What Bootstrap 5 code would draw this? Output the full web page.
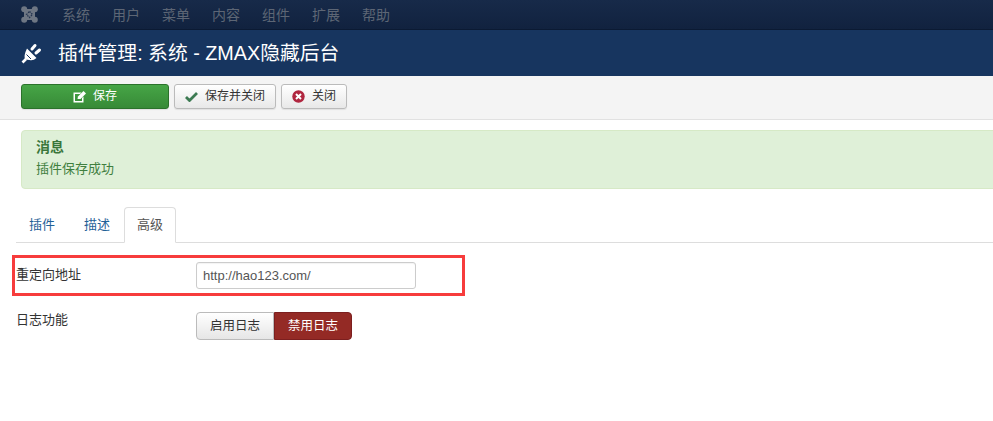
<!DOCTYPE html>
<html lang="zh">
<head>
<meta charset="utf-8">
<title>插件管理</title>
<link href="https://cdn.jsdelivr.net/npm/bootstrap@5.3.0/dist/css/bootstrap.min.css" rel="stylesheet">
<style>
html,body{height:421px;overflow:hidden;background:#fff}
body{font-family:"Liberation Sans","Noto Sans CJK SC",sans-serif;font-size:13px;line-height:18px;color:#333}
.top-bar{height:30px;background:linear-gradient(#172a49,#11223f);border-bottom:1px solid #0b1a33;padding-left:21px;gap:21px;color:#5d6675;font-size:14px}
.top-bar svg{margin-right:3px}
.top-item{width:29px;white-space:nowrap}
.title-bar{height:46px;background:#17355f;color:#fff;padding-left:21px;font-size:19.8px;gap:16px}
.tool-bar{height:44px;background:#f4f4f4;border-bottom:1px solid #e1e1e1;padding:8px 0 0 21px;gap:5px}
.tbtn{height:25px;border:1px solid #bbb;border-radius:3px;background:linear-gradient(#fff,#e8e8e8);color:#333;font-size:12px;line-height:23px;padding:0;gap:7px;--bs-btn-hover-color:#333;box-shadow:0 1px 1px rgba(0,0,0,.08)}
.tbtn-save{width:148px;background:linear-gradient(#46a546,#378a37);border-color:#2b722b;color:#fff;--bs-btn-hover-color:#fff}
.tbtn-apply{width:102px}
.tbtn-close{width:66px}
.msg-box{margin:10px -40px 0 21px;height:59px;background:#dff0d8;border:1px solid #d6e9c6;border-radius:4px;padding:6px 14px;color:#3f7f3f;font-size:13px;line-height:18px}
.msg-title{font-size:14px;font-weight:700;line-height:20px;margin-bottom:3px;color:#3a763a}
.tab-row{margin:18px 0 0 16px;height:36px;border-bottom:1px solid #ddd}
.tab-row .nav-link{border:1px solid transparent;border-radius:4px 4px 0 0;height:36px;padding:8px 12px;font-size:13px;line-height:18px;color:#1f6197;margin:0 3px 0 0}
.tab-row .nav-link.active{width:52px;color:#555;background:#fff;border-color:#ddd #ddd #fff;height:36px;margin:0 0 0 -2px}
.form-area{margin:0 0 0 16px;padding-top:19px;position:relative}
.field-row{font-size:13px}
.field-label{width:180px;color:#333;margin-top:-2px}
.log-row .field-label{margin-top:-1px}
.url-input{width:220px;height:27px;border:1px solid #ccc;border-radius:3px;padding:4px 6px;font-size:13px;line-height:18px;color:#555;box-shadow:inset 0 1px 1px rgba(0,0,0,.05)}
.log-row{margin-top:23px}
.sw-on{width:78px;height:28px;border:1px solid #bbb;border-radius:4px 0 0 4px;background:linear-gradient(#fff,#e6e6e6);color:#333;font-size:12.5px;padding:0}
.sw-off{width:78px;height:28px;border:1px solid #7c1f1f;border-radius:0 4px 4px 0;background:#942a25;color:#fff;font-size:12.5px;padding:0}
.mark-frame{position:absolute;left:-4px;top:12px;width:453px;height:41px;border:3px solid #f73c3c;pointer-events:none}
</style>
</head>
<body>
<nav class="top-bar d-flex align-items-center">
<svg width="17" height="17" viewBox="0 0 17 17" aria-hidden="true"><g fill="#6e7683"><circle cx="3.2" cy="3.2" r="3"/><circle cx="13.8" cy="3.2" r="3"/><circle cx="3.2" cy="13.8" r="3"/><circle cx="13.8" cy="13.8" r="3"/><rect x="3" y="3" width="11" height="11"/></g><path d="M8.5 5.5L11.5 8.5L8.5 11.5L5.5 8.5Z" fill="none" stroke="#243450" stroke-width="1.3" stroke-dasharray="1.5 1"/></svg>
<span class="top-item">系统</span><span class="top-item">用户</span><span class="top-item">菜单</span><span class="top-item">内容</span><span class="top-item">组件</span><span class="top-item">扩展</span><span class="top-item">帮助</span>
</nav>
<header class="title-bar d-flex align-items-center">
<svg width="21" height="21" viewBox="0 0 21 21" aria-hidden="true"><path d="M1.5 19.5L5 16" stroke="#fff" stroke-width="2.6"/><path d="M6 5.5L15.5 15Q12 18 8.5 17L4 16.5Q2.5 12.5 6 5.5Z" fill="#fff"/><path d="M11 6L14 2.5M15 10L18.5 7" stroke="#fff" stroke-width="3" stroke-linecap="round"/><path d="M5.5 11.5L10 16" stroke="#17355f" stroke-width="1"/></svg>
<span>插件管理: 系统 - ZMAX隐藏后台</span>
</header>
<div class="tool-bar d-flex">
<button class="btn tbtn tbtn-save d-flex align-items-center justify-content-center" type="button"><svg width="13" height="12" viewBox="0 0 13 12" aria-hidden="true"><path d="M.5 1.5H8.5L7 3H2V10H9V7L10.5 5.5V11.5H.5Z" fill="#fff"/><path d="M4.5 8L5 5.5L10.5 0L13 2.5L7.5 8Z" fill="#fff"/></svg>保存</button>
<button class="btn tbtn tbtn-apply d-flex align-items-center justify-content-center" type="button"><svg width="13" height="11" viewBox="0 0 13 11" aria-hidden="true"><path d="M1 6L4.5 9.5L12 2" fill="none" stroke="#3c7a52" stroke-width="2.8"/></svg>保存并关闭</button>
<button class="btn tbtn tbtn-close d-flex align-items-center justify-content-center" type="button"><svg width="13" height="13" viewBox="0 0 13 13" aria-hidden="true"><circle cx="6.5" cy="6.5" r="6.2" fill="#b0263f"/><path d="M4 4L9 9M9 4L4 9" stroke="#fff" stroke-width="2"/></svg>关闭</button>
</div>
<div class="msg-box">
<div class="msg-title">消息</div>
<div>插件保存成功</div>
</div>
<ul class="nav tab-row">
<li class="nav-item"><a class="nav-link" href="#">插件</a></li>
<li class="nav-item"><a class="nav-link" href="#">描述</a></li>
<li class="nav-item"><a class="nav-link active" href="#">高级</a></li>
</ul>
<form class="form-area">
<div class="mark-frame"></div>
<div class="field-row d-flex align-items-center">
<label class="field-label">重定向地址</label>
<input class="url-input" type="text" value="http://hao123.com/">
</div>
<div class="field-row log-row d-flex">
<label class="field-label">日志功能</label>
<div class="d-flex">
<button class="btn sw-on" type="button">启用日志</button>
<button class="btn sw-off" type="button">禁用日志</button>
</div>
</div>
</form>
</body>
</html>
